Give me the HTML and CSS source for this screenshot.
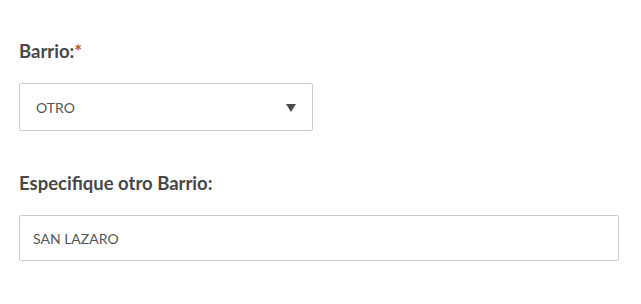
FILE: index.html
```html
<!DOCTYPE html>
<html lang="es">
<head>
<meta charset="utf-8">
<title>Barrio</title>
<link rel="stylesheet" href="styles.css">
</head>
<body>
<form class="form">
  <div class="field field-first">
    <label class="label">Barrio:<span class="req">*</span></label>
    <div class="select">
      <span class="select-value">OTRO</span>
      <svg class="caret" width="10" height="8" viewBox="0 0 10 8"><path d="M0 0H10L5 8Z" fill="#4a4a4a"/></svg>
    </div>
  </div>
  <div class="field field-second">
    <label class="label">Especifique otro Barrio:</label>
    <div class="input">SAN LAZARO</div>
  </div>
</form>
</body>
</html>
```
FILE: styles.css
```css
html, body {
  margin: 0;
  padding: 0;
  background: #ffffff;
}
body {
  font-family: Lato, "Open Sans", sans-serif;
  color: #444444;
}
.form {
  padding: 0 22px 0 19px;
}
.field {
  display: flex;
  flex-direction: column;
}
.field-first {
  padding-top: 40px;
}
.field-second {
  padding-top: 41px;
}
.label {
  font-size: 18.5px;
  font-weight: 700;
  line-height: 22px;
  color: #474747;
  margin-bottom: 21px;
}
.req {
  color: #c0541f;
}
.select {
  height: 46px;
  border: 1px solid #cccccc;
  border-radius: 2px;
  display: flex;
  align-items: center;
  justify-content: space-between;
  padding: 0 16px 0 16px;
  box-sizing: content-box;
  width: 260px;
}
.select-value, .input {
  font-size: 14px;
  font-weight: 400;
  color: #555555;
}
.caret {
  display: block;
  margin-top: 2px;
}
.input {
  height: 44px;
  border: 1px solid #cccccc;
  border-radius: 2px;
  display: flex;
  align-items: center;
  padding: 0 13px;
}
```
